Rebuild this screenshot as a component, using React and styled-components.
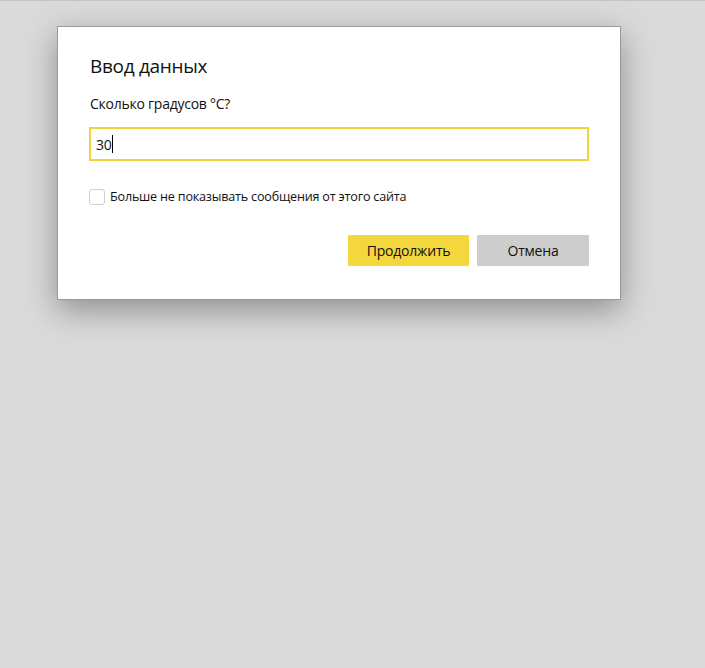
import React from 'react'
import styled, { createGlobalStyle } from 'styled-components'

const GlobalStyle = createGlobalStyle`
    html, body {
        margin: 0;
        padding: 0;
        background: #dadada;
        font-family: "Open Sans", "Noto Sans", sans-serif;
    }
`

function App() {
    return (
        <>
        <GlobalStyle />
        <Page>
            <Dialog>
                <Title>Ввод данных</Title>
                <Question>Сколько градусов °C?</Question>
                <InputBox>
                    <Value>30</Value>
                    <Caret />
                </InputBox>
                <CheckRow>
                    <Box />
                    <CheckLabel>Больше не показывать сообщения от этого сайта</CheckLabel>
                </CheckRow>
                <Buttons>
                    <Button primary>Продолжить</Button>
                    <Button>Отмена</Button>
                </Buttons>
            </Dialog>
        </Page>
        </>
    )
}

export default App

const Page = styled.div`
    min-height: 668px;
    border-top: 1px solid #c4c4c4;
    box-sizing: border-box;
    padding: 25px 0 0 57px;
`

const Dialog = styled.div`
    width: 564px;
    height: 274px;
    box-sizing: border-box;
    background: #fff;
    border: 1px solid #9a9a9a;
    box-shadow: 0 10px 30px rgba(0, 0, 0, 0.35);
    padding: 24px 31px 0 31px;
    display: flex;
    flex-direction: column;
`

const Title = styled.h1`
    margin: 0 0 0 1px;
    font-size: 19px;
    font-weight: 400;
    color: #111;
    line-height: 30px;
    letter-spacing: -0.3px;
`

const Question = styled.p`
    margin: 13px 0 0 1px;
    font-size: 14px;
    line-height: 20px;
    color: #111;
    letter-spacing: -0.25px;
`

const InputBox = styled.div`
    margin-top: 13px;
    height: 34px;
    box-sizing: border-box;
    border: 2px solid #f2d33b;
    display: flex;
    align-items: center;
    padding-left: 5px;
`

const Value = styled.span`
    font-size: 14px;
    color: #111;
    letter-spacing: -0.3px;
`

const Caret = styled.span`
    width: 1px;
    height: 18px;
    background: #000;
    margin-left: 1px;
`

const CheckRow = styled.label`
    margin-top: 27px;
    display: flex;
    align-items: center;
    gap: 5px;
`

const Box = styled.span`
    width: 14px;
    height: 14px;
    border: 1px solid #d0d0d0;
    border-radius: 3px;
    background: #fff;
`

const CheckLabel = styled.span`
    font-size: 12.6px;
    color: #111;
    letter-spacing: -0.2px;
`

const Buttons = styled.div`
    margin-top: 30px;
    display: flex;
    justify-content: flex-end;
    gap: 8px;
`

const Button = styled.button`
    height: 31px;
    border: none;
    border-radius: 1px;
    padding: 0;
    width: ${props => (props.primary ? '121px' : '112px')};
    background: ${props => (props.primary ? '#f4d63d' : '#cdcdcd')};
    font-family: inherit;
    font-size: 14px;
    color: #111;
    letter-spacing: -0.2px;
`
